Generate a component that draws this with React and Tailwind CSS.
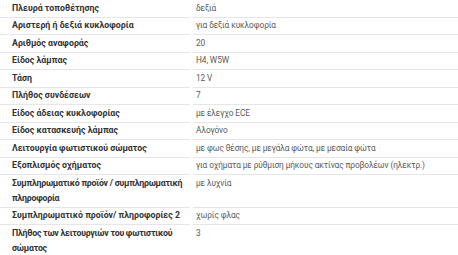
import React from "react";

const rows = [
  [["Πλευρά τοποθέτησης"], "δεξιά"],
  [["Αριστερή ή δεξιά κυκλοφορία"], "για δεξιά κυκλοφορία"],
  [["Αριθμός αναφοράς"], "20"],
  [["Είδος λάμπας"], "H4, W5W"],
  [["Τάση"], "12 V"],
  [["Πλήθος συνδέσεων"], "7"],
  [["Είδος άδειας κυκλοφορίας"], "με έλεγχο ECE"],
  [["Είδος κατασκευής λάμπας"], "Αλογόνο"],
  [["Λειτουργία φωτιστικού σώματος"], "με φως θέσης, με μεγάλα φώτα, με μεσαία φώτα"],
  [["Εξοπλισμός οχήματος"], "για οχήματα με ρύθμιση μήκους ακτίνας προβολέων (ηλεκτρ.)"],
  [["Συμπληρωματικό προϊόν / συμπληρωματική", "πληροφορία"], "με λυχνία", true],
  [["Συμπληρωματικό προϊόν/ πληροφορίες 2"], "χωρίς φλας"],
  [["Πλήθος των λειτουργιών του φωτιστικού", "σώματος"], "3", true],
];

export default function App() {
  return (
    <div className="w-[458px] h-[255px] overflow-hidden bg-white font-['Roboto',sans-serif]">
      <div className="grid grid-cols-[190px_1fr] gap-x-[3px] leading-[15px]">
        {rows.map(([k, v, tight], i) => (
          <React.Fragment key={i}>
            <div
              className={
                tight
                  ? "pl-[12px] py-[0.75px] border-b border-[#e6e6e6] text-[8.8px] font-bold text-[#333333] whitespace-nowrap tracking-[-0.25px]"
                  : "pl-[12px] py-[0.75px] border-b border-[#e6e6e6] text-[8.8px] font-bold text-[#333333] whitespace-nowrap"
              }
            >
              {k.map((line, j) => (
                <div key={j}>{line}</div>
              ))}
            </div>
            <div className="pl-[3px] py-[0.75px] border-b border-[#e6e6e6] text-[8.3px] tracking-[-0.1px] text-[#5a5a5a] whitespace-nowrap">{v}</div>
          </React.Fragment>
        ))}
      </div>
    </div>
  );
}
